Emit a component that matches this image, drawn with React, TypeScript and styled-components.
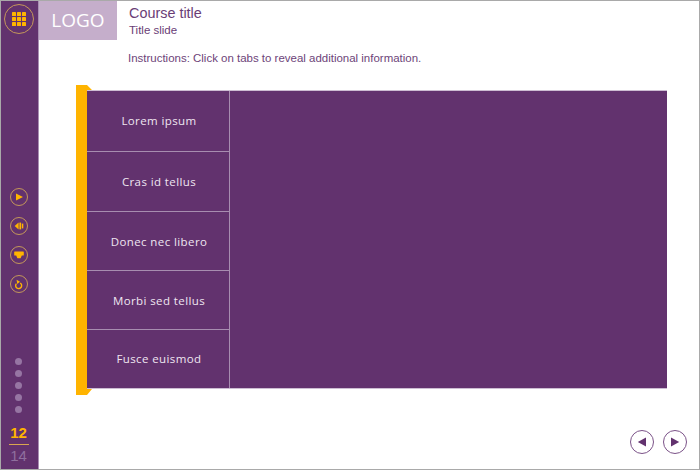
import styled, { createGlobalStyle } from "styled-components"

const GlobalStyle = createGlobalStyle`
html, body {
  margin: 0;
  padding: 0;
  background: #fff;
}
`

const tabs = [
  { label: "Lorem ipsum", height: 61 },
  { label: "Cras id tellus", height: 60 },
  { label: "Donec nec libero", height: 59 },
  { label: "Morbi sed tellus", height: 59 },
  { label: "Fusce euismod", height: 59 },
]

const App = () => {
  return (
    <Frame>
      <GlobalStyle />
      <Sidebar>
        <MenuButton>
          <svg width="14" height="14" viewBox="0 0 14 14" fill="#ffb400">
            {[0, 5, 10].map((y) =>
              [0, 5, 10].map((x) => <rect key={`${x}-${y}`} x={x} y={y} width="4" height="4" rx="0.6" />)
            )}
          </svg>
        </MenuButton>
        <Controls>
          <ControlButton>
            <svg width="10" height="10" viewBox="0 0 10 10" fill="#ffb400">
              <path d="M2 1.5 L9 5 L2 8.5 Z" />
            </svg>
          </ControlButton>
          <ControlButton>
            <svg width="10" height="10" viewBox="0 0 10 10" fill="#ffb400">
              <path d="M0.6 5 L4.6 1.6 V8.4 Z" />
              <rect x="5.4" y="1.6" width="1.7" height="6.8" />
              <rect x="7.8" y="2.6" width="1.5" height="4.8" />
            </svg>
          </ControlButton>
          <ControlButton>
            <svg width="10" height="8" viewBox="0 0 10 8" fill="#ffb400">
              <path d="M0.8 0.5 H9.2 Q9.8 0.5 9.8 1.1 V4 Q9.8 4.6 9.2 4.6 H7.8 L6.6 7.2 H3.4 L2.2 4.6 H0.8 Q0.2 4.6 0.2 4 V1.1 Q0.2 0.5 0.8 0.5 Z" />
            </svg>
          </ControlButton>
          <ControlButton>
            <svg width="10" height="11" viewBox="0 0 10 11" fill="none" stroke="#ffb400" strokeWidth="1.4">
              <path d="M6.2 4 A3 3 0 1 1 2.4 4.6" />
              <path d="M2.6 0.8 L6 2.8 L3.2 5 Z" fill="#ffb400" stroke="none" />
            </svg>
          </ControlButton>
        </Controls>
        <Dots>
          <Dot />
          <Dot />
          <Dot />
          <Dot />
          <Dot />
        </Dots>
        <Counter>
          <Current>12</Current>
          <Total>14</Total>
        </Counter>
      </Sidebar>
      <Main>
        <Header>
          <Logo>LOGO</Logo>
          <Titles>
            <CourseTitle>Course title</CourseTitle>
            <SlideTitle>Title slide</SlideTitle>
          </Titles>
        </Header>
        <Instructions>Instructions: Click on tabs to reveal additional information.</Instructions>
        <TabFrame>
          <Panel>
            <TabList>
              {tabs.map((tab) => (
                <Tab key={tab.label} $height={tab.height}>
                  {tab.label}
                </Tab>
              ))}
            </TabList>
          </Panel>
        </TabFrame>
        <Footer>
          <NavButton aria-label="Previous">
            <svg width="12" height="12" viewBox="0 0 12 12" fill="#62326e">
              <path d="M10 1.5 V10.5 L1.8 6 Z" />
            </svg>
          </NavButton>
          <NavButton aria-label="Next">
            <svg width="12" height="12" viewBox="0 0 12 12" fill="#62326e">
              <path d="M2 1.5 V10.5 L10.2 6 Z" />
            </svg>
          </NavButton>
        </Footer>
      </Main>
    </Frame>
  )
}
export default App

const Frame = styled.div`
width: 700px;
height: 470px;
box-sizing: border-box;
border: 1px solid #a9a9a9;
display: flex;
overflow: hidden;
background: #fff;
font-family: "Liberation Sans", Arial, sans-serif;
`

const Sidebar = styled.div`
width: 35px;
padding-right: 2px;
flex-shrink: 0;
background: #62326e;
border-right: 1px solid #a98fb3;
display: flex;
flex-direction: column;
align-items: center;
`

const MenuButton = styled.div`
width: 28px;
height: 28px;
margin-top: 3px;
border: 1px solid #c4975a;
border-radius: 50%;
display: flex;
align-items: center;
justify-content: center;
`

const Controls = styled.div`
display: flex;
flex-direction: column;
gap: 11px;
margin-top: 154px;
`

const ControlButton = styled.div`
width: 16px;
height: 16px;
border: 1px solid #c4975a;
border-radius: 50%;
display: flex;
align-items: center;
justify-content: center;
`

const Dots = styled.div`
display: flex;
flex-direction: column;
gap: 5px;
margin-top: 65px;
`

const Dot = styled.div`
width: 7px;
height: 7px;
border-radius: 50%;
background: #9675a3;
`

const Counter = styled.div`
margin-top: 11px;
width: 20px;
display: flex;
flex-direction: column;
align-items: center;
`

const Current = styled.div`
width: 100%;
text-align: center;
font-size: 15px;
font-weight: bold;
line-height: 18px;
color: #ffb400;
padding-bottom: 2px;
border-bottom: 1px solid #d9a650;
`

const Total = styled.div`
margin-top: 2px;
font-size: 15px;
line-height: 18px;
color: #8f6f9e;
`

const Main = styled.div`
flex: 1;
min-width: 0;
display: flex;
flex-direction: column;
`

const Header = styled.div`
display: flex;
height: 39px;
`

const Logo = styled.div`
width: 78px;
background: #c5aecb;
color: #fff;
font-family: "Open Sans", sans-serif;
font-size: 19px;
line-height: 39px;
text-align: center;
`

const Titles = styled.div`
margin-left: 12px;
padding-top: 4px;
color: #6a3d76;
`

const CourseTitle = styled.div`
font-size: 14.4px;
line-height: 17px;
`

const SlideTitle = styled.div`
font-size: 11.5px;
line-height: 15px;
margin-top: 1px;
`

const Instructions = styled.div`
margin: 11px 0 0 89px;
font-size: 11.47px;
line-height: 15px;
color: #6d4479;
`

const TabFrame = styled.div`
margin: 19px 0 0 37px;
width: 591px;
height: 310px;
box-sizing: border-box;
padding: 5px 0 6px 11px;
display: flex;
background: #ffb400;
clip-path: polygon(0 0, 11px 0, 16px 5px, 100% 5px, 100% calc(100% - 6px), 16px calc(100% - 6px), 11px 100%, 0 100%);
`

const Panel = styled.div`
flex: 1;
background: #62326e;
border-top: 1px solid #cdbdd3;
border-bottom: 1px solid #cdbdd3;
display: flex;
`

const TabList = styled.div`
width: 142px;
border-right: 1px solid #a78db0;
display: flex;
flex-direction: column;
`

const Tab = styled.div<{ $height: number }>`
height: ${(p) => p.$height}px;
box-sizing: border-box;
flex-shrink: 0;
padding-left: 2px;
display: flex;
align-items: center;
justify-content: center;
color: #efe6f1;
font-family: "Open Sans", sans-serif;
font-size: 11.5px;
letter-spacing: 0.4px;
border-bottom: 1px solid #a78db0;

&:first-child {
  padding-bottom: 2px;
}

&:last-child {
  padding-bottom: 3px;
  border-bottom: none;
}
`

const Footer = styled.div`
display: flex;
justify-content: flex-end;
gap: 9px;
margin-top: 35px;
padding-right: 12px;
`

const NavButton = styled.div`
width: 22px;
height: 22px;
border: 1px solid #7b5288;
border-radius: 50%;
display: flex;
align-items: center;
justify-content: center;
`
